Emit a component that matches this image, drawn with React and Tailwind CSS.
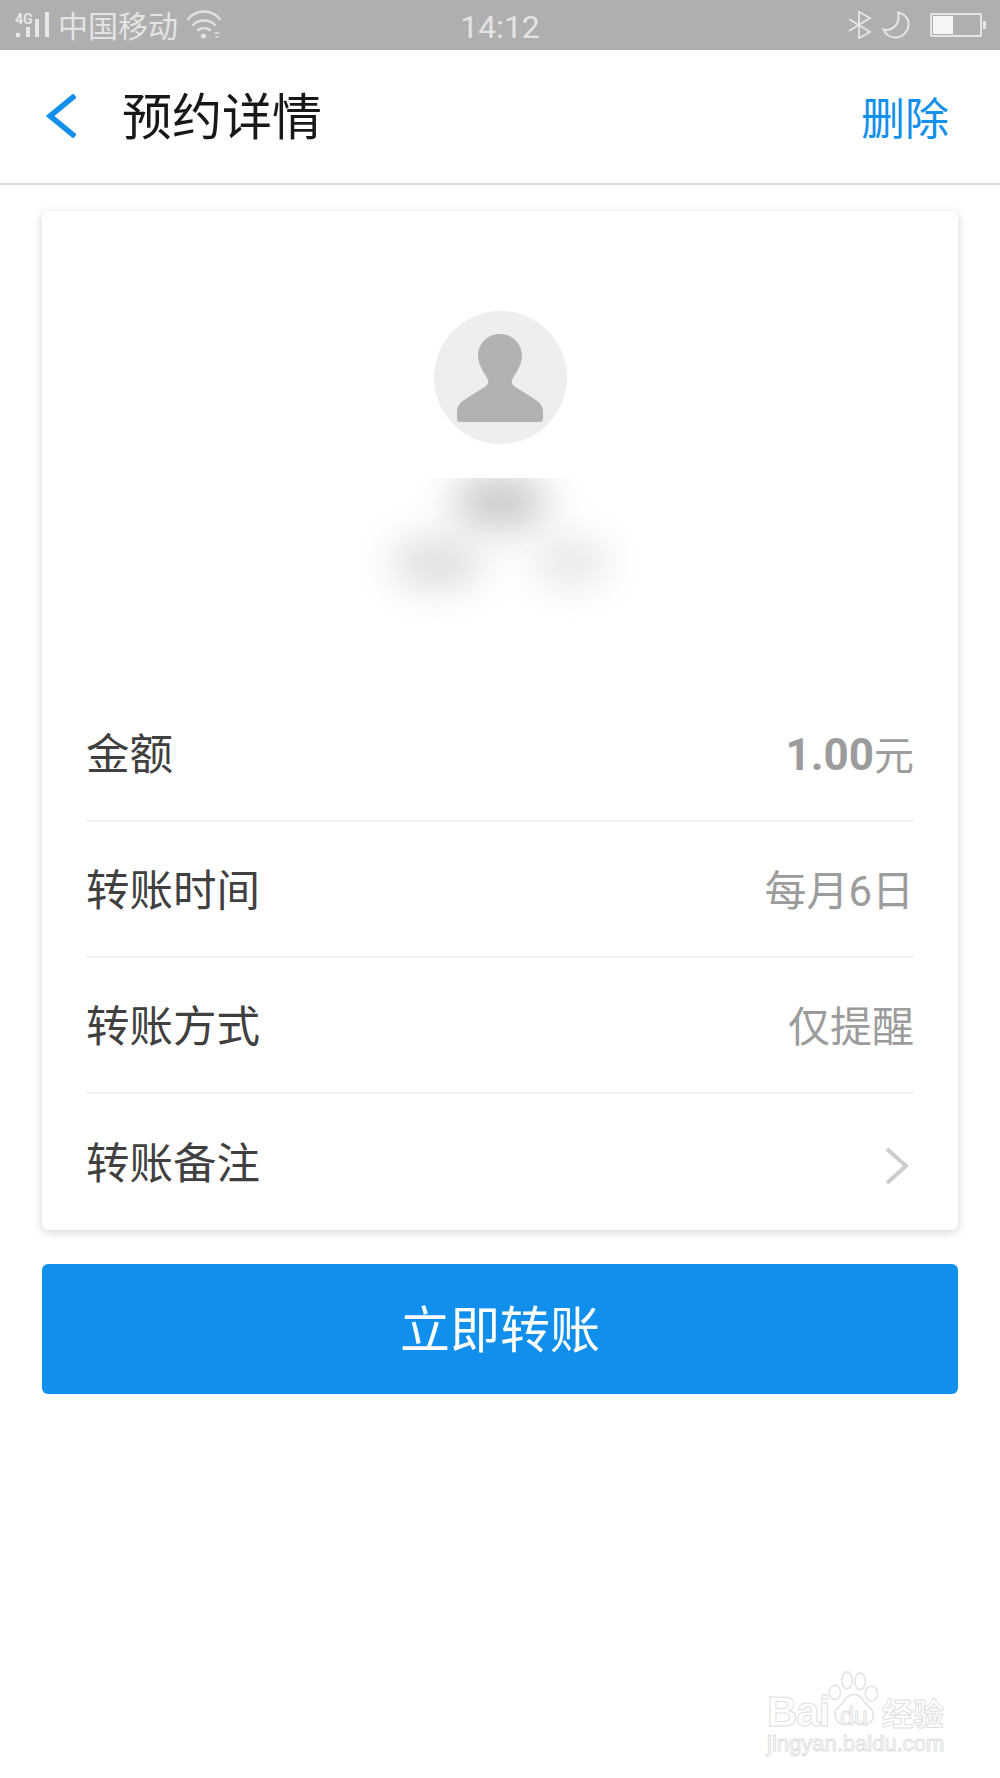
const cjk = "font-['Roboto','Noto_Sans_CJK_SC',sans-serif]";

function Signal() {
  return (
    <div className="relative w-[37px] h-[38px]">
      <span className="absolute left-[1px] top-[6px] text-[14px] leading-[14px] font-bold text-[#e8e8e8] font-['Roboto',sans-serif]">4G</span>
      <svg width="37" height="38" viewBox="0 0 37 38" className="absolute left-0 top-0" fill="#e8e8e8">
        <rect x="2" y="27" width="4" height="4" />
        <rect x="12" y="21" width="4" height="10" />
        <rect x="21" y="13" width="4" height="18" />
        <rect x="31" y="6" width="4" height="25" />
      </svg>
    </div>
  );
}

function Wifi() {
  return (
    <svg width="36" height="30" viewBox="0 0 36 30" fill="none" stroke="#e2e2e2" strokeWidth="2.4" strokeLinecap="round">
      <path d="M2 9 C 11 -1, 25 -1, 34 9" />
      <path d="M7 15 C 13 9, 23 9, 29 15" />
      <path d="M12 20 C 15 17.5, 21 17.5, 24 20" />
      <circle cx="17.5" cy="26" r="2.6" fill="#e2e2e2" stroke="none" />
      <path d="M29 23 h4 M30 27 h2" strokeWidth="1.6" />
    </svg>
  );
}

function Bluetooth() {
  return (
    <svg width="24" height="28" viewBox="0 0 24 28" fill="none" stroke="#e6e6e6" strokeWidth="1.8">
      <path d="M1 8 L22 21 L11 27 V1 L22 7 L1 20" />
    </svg>
  );
}

function Moon() {
  return (
    <svg width="28" height="28" viewBox="0 0 28 28" fill="none" stroke="#e6e6e6" strokeWidth="2">
      <path d="M16 1.5 C 24 3, 27 9, 26.5 14 C 26 21, 20 26.5, 13.5 26.5 C 8 26.5, 3.5 23.5, 1.5 18.5 C 9 20.5, 19 14, 16 1.5 Z" />
    </svg>
  );
}

function Battery() {
  return (
    <div className="flex items-center">
      <div className="w-[52px] h-[24px] rounded-[2px] border-2 border-[#e6e6e6] p-[1px]">
        <div className="w-[20px] h-full bg-[#f5f5f5]" />
      </div>
      <div className="w-[3px] h-[8px] bg-[#e6e6e6] ml-[1px] rounded-r-[1px]" />
    </div>
  );
}

function Row({ label, children, last }) {
  return (
    <div className={`h-[136px] pt-[5px] flex items-center justify-between ${last ? "" : "border-b-2 border-[#f2f2f2]"}`}>
      <span className="text-[43.5px] leading-[60px] text-[#404040]">{label}</span>
      {children}
    </div>
  );
}

function Watermark() {
  const outline = "text-white [-webkit-text-stroke:1px_#e0e0e0]";
  return (
    <div className="absolute left-[767px] top-[1667px] w-[180px] h-[90px]">
      <span className={`absolute left-[0px] top-[26px] text-[42px] leading-[38px] tracking-[-1px] font-bold font-['Liberation_Sans',sans-serif] ${outline}`}>Bai</span>
      <svg className="absolute left-[60px] top-[4px]" width="54" height="58" viewBox="0 0 62 62" preserveAspectRatio="none" fill="#fff" stroke="#e4e4e4" strokeWidth="1.8">
        <ellipse cx="9" cy="23" rx="6.5" ry="7.5" />
        <ellipse cx="23" cy="10" rx="6" ry="9" />
        <ellipse cx="38" cy="11" rx="6" ry="9" />
        <ellipse cx="51" cy="24" rx="7" ry="8" />
        <path d="M31 25 C 22 25, 20 34, 13 39 C 6 45, 9 57, 20 57 C 25 57, 27 55, 31 55 C 36 55, 38 57, 43 57 C 54 57, 56 44, 49 39 C 42 34, 40 25, 31 25 Z" />
      </svg>
      <span className={`absolute left-[73px] top-[36px] text-[25px] leading-[26px] font-['Liberation_Sans',sans-serif] ${outline}`}>du</span>
      <span className={`absolute left-[115px] top-[26px] text-[31px] leading-[38px] font-bold font-['Noto_Sans_CJK_SC',sans-serif] ${outline}`}>经验</span>
      <span className={`absolute left-0 top-[66px] text-[22px] leading-[22px] whitespace-nowrap font-['Liberation_Sans',sans-serif] ${outline}`}>jingyan.baidu.com</span>
    </div>
  );
}

export default function App() {
  return (
    <div className={`relative w-[1000px] h-[1778px] bg-white overflow-hidden ${cjk}`}>
      <div className="h-[50px] bg-[#afafaf] flex items-center justify-between pl-[14px] pr-[14px] relative">
        <div className="flex items-center gap-[8px]">
          <Signal />
          <span className="text-[30px] leading-[40px] text-[#e4e4e4] -ml-[1px] mt-[4px]">中国移动</span>
          <Wifi />
        </div>
        <span className="absolute left-0 right-0 text-center text-[32px] leading-[40px] pt-[4px] text-[#e4e4e4] pointer-events-none">14:12</span>
        <div className="flex items-center">
          <Bluetooth />
          <div className="w-[10px]" />
          <Moon />
          <div className="w-[20px]" />
          <Battery />
        </div>
      </div>

      <div className="h-[135px] border-b-2 border-[#dedede] flex items-center pl-[46px] pr-[51px]">
        <svg width="30" height="44" viewBox="0 0 30 44" fill="none" stroke="#1390eb" strokeWidth="5.5" className="mt-[-2px]">
          <path d="M29 1.5 L4 22 L29 42.5" />
        </svg>
        <span className="ml-[46px] text-[50px] leading-[66px] text-[#181818] mt-[3px]">预约详情</span>
        <span className="ml-auto text-[44px] leading-[60px] text-[#1390eb] mt-[7px]">删除</span>
      </div>

      <div className="mx-[42px] mt-[26px] h-[1019px] bg-white rounded-[6px] shadow-[0_2px_10px_rgba(0,0,0,0.18)] px-[44px] flex flex-col">
        <div className="h-[100px] shrink-0" />
        <div className="w-[133px] h-[133px] rounded-full bg-[#eeeeee] self-center shrink-0 flex items-center justify-center">
          <svg width="86" height="88" viewBox="0 0 86 88" fill="#b2b2b2">
            <path d="M43 0 C 55 0, 65 9, 65 22 C 65 31, 59 38, 55 46 C 54 49, 56 52, 60 54 L 79 66 C 83 69, 86 72, 86 78 V 84 C 86 87, 85 88, 82 88 H 4 C 1 88, 0 87, 0 84 V 78 C 0 72, 3 69, 7 66 L 26 54 C 30 52, 32 49, 31 46 C 27 38, 21 31, 21 22 C 21 9, 31 0, 43 0 Z" />
          </svg>
        </div>
        <div className="mt-[34px] h-[150px] w-[320px] self-center shrink-0 overflow-hidden flex flex-col items-center">
          <div className="w-[90px] h-[48px] shrink-0 rounded-full bg-[#c4c4c4] blur-[20px]" />
          <div className="flex gap-[56px] mt-[16px]">
            <div className="w-[86px] h-[42px] rounded-full bg-[#d8d8d8] blur-[20px]" />
            <div className="w-[70px] h-[40px] rounded-full bg-[#e2e2e2] blur-[20px]" />
          </div>
        </div>
        <div className="h-[58px] shrink-0" />
        <Row label="金额">
          <span className="flex items-baseline text-[#9c9c9c]">
            <span className="text-[44px] leading-[60px] font-bold">1.00</span>
            <span className="text-[40px] leading-[60px]">元</span>
          </span>
        </Row>
        <Row label="转账时间">
          <span className="text-[42px] leading-[60px] text-[#9c9c9c]">每月6日</span>
        </Row>
        <Row label="转账方式">
          <span className="text-[42px] leading-[60px] text-[#9c9c9c]">仅提醒</span>
        </Row>
        <Row label="转账备注" last>
          <svg width="26" height="38" viewBox="0 0 26 38" fill="none" stroke="#cdcdcd" strokeWidth="4" className="mr-[4px] mt-[2px]">
            <path d="M3 2 L22 19 L3 36" />
          </svg>
        </Row>
      </div>

      <div className="mx-[42px] mt-[34px] h-[130px] rounded-[6px] bg-[#118fec] flex items-center justify-center">
        <span className="text-[50px] leading-[66px] text-white mt-[3px]">立即转账</span>
      </div>

      <Watermark />
    </div>
  );
}
